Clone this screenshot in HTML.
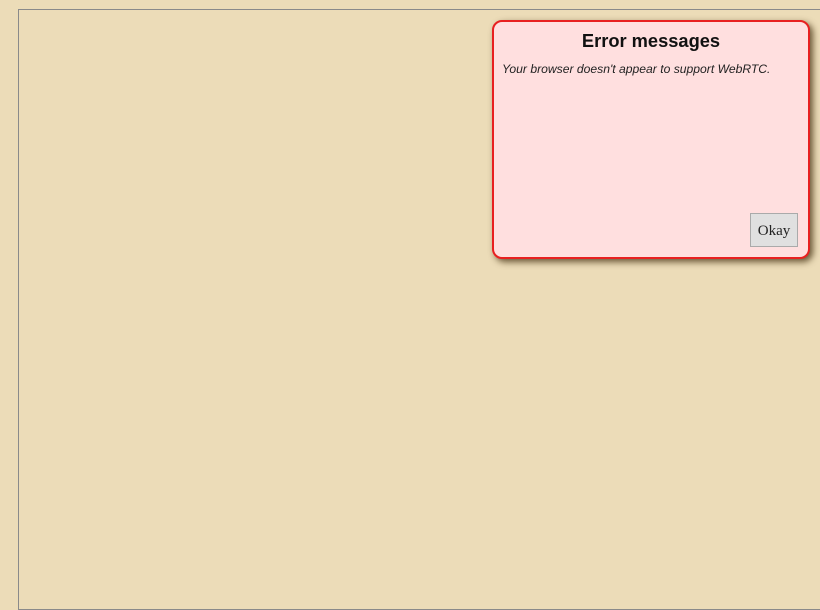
<!DOCTYPE html>
<html><head><style>
html,body{margin:0;padding:0;width:820px;height:610px;overflow:hidden;background:#ecdcb8;}
.frame{position:absolute;left:18px;top:9px;width:820px;height:599px;border:1px solid #8a8a8a;}
.box{position:absolute;left:492px;top:20px;width:314px;height:235px;background:#ffdfdf;border:2px solid #e82020;border-radius:10px;box-shadow:3px 3px 7px rgba(60,40,10,.75);font-family:"Liberation Sans",sans-serif;}
h1{margin:0;position:absolute;top:8px;left:0;right:0;text-align:center;font-size:18.3px;font-weight:bold;color:#111;}
p{margin:0;position:absolute;left:8px;top:40px;font-size:12.15px;font-style:italic;color:#222;}
.btn{position:absolute;left:256px;top:191px;width:46px;height:32px;background:#e0e0e0;border:1px solid #aaa;font-family:"Liberation Serif",serif;font-size:15px;line-height:34px;text-align:center;color:#222;}
</style></head><body>
<div class="frame"></div>
<div class="box"><h1>Error messages</h1><p>Your browser doesn't appear to support WebRTC.</p><div class="btn">Okay</div></div>
</body></html>
